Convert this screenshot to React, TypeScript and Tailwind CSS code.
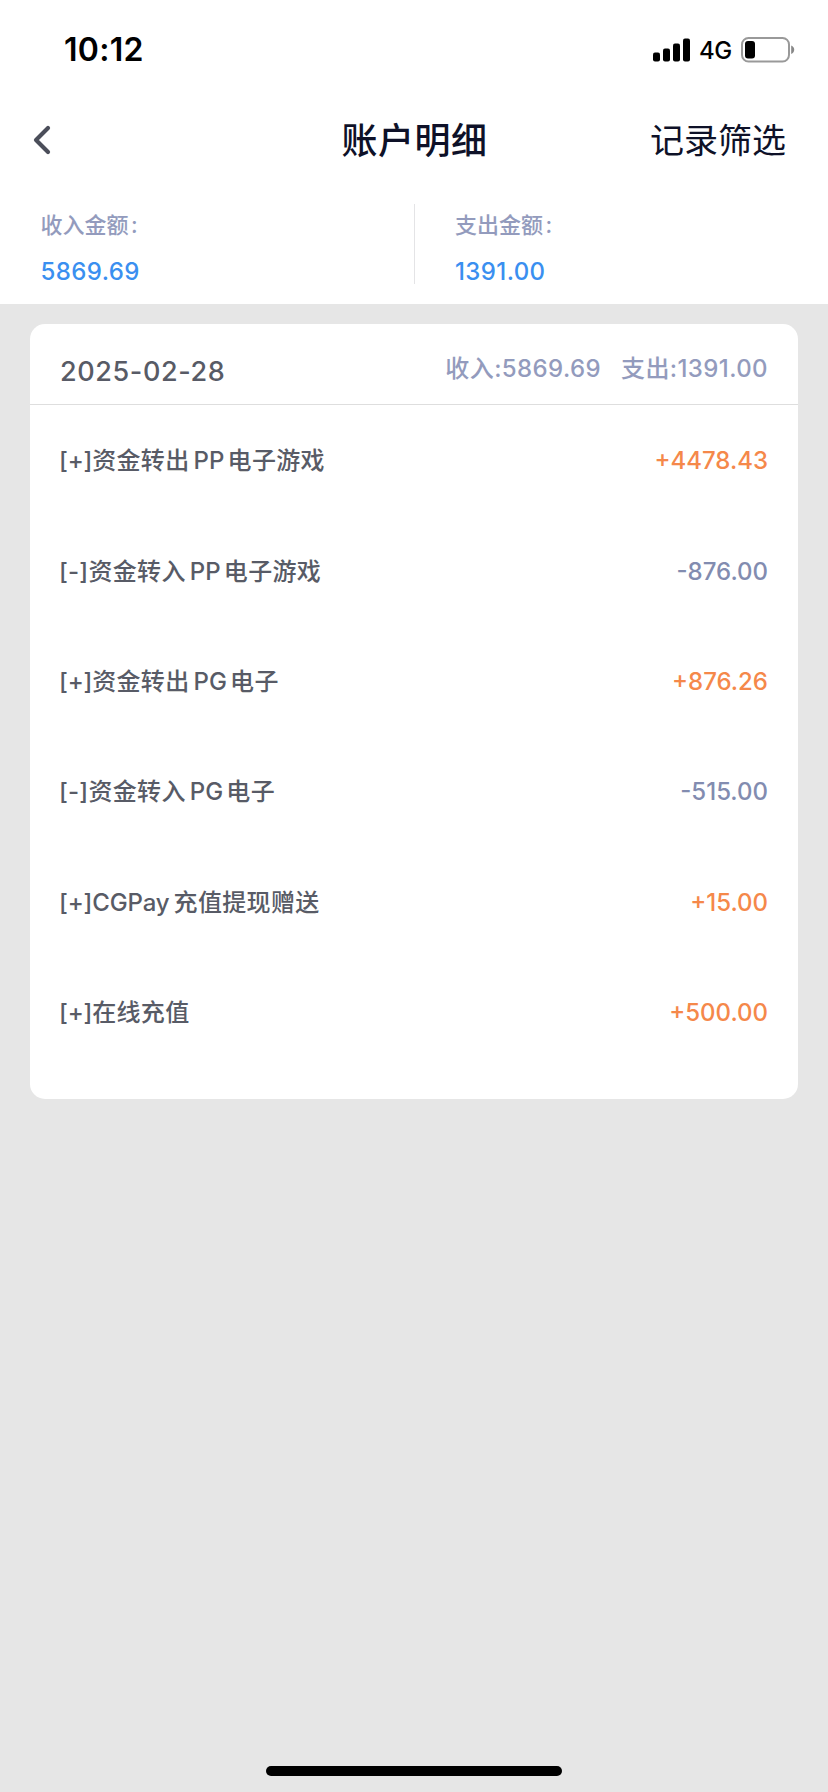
import React from "react";

type Part = { text: string; className: string };
type Entry = { label: Part[]; amount: string; amountClass: string };

const plus = "tracking-[-0.2px]";
const minus = "tracking-[0.2px]";
const cjk = "tracking-[0.35px]";
const mid = "ml-[4px] mr-[3px] tracking-[0.1px]";

const income = "text-[#f5884a]";
const expense = "text-[#828cb0]";

const entries: Entry[] = [
  {
    label: [
      { text: "[+]", className: plus },
      { text: "资金转出", className: cjk },
      { text: "PP", className: mid },
      { text: "电子游戏", className: cjk },
    ],
    amount: "+4478.43",
    amountClass: income,
  },
  {
    label: [
      { text: "[-]", className: minus },
      { text: "资金转入", className: cjk },
      { text: "PP", className: mid },
      { text: "电子游戏", className: cjk },
    ],
    amount: "-876.00",
    amountClass: expense,
  },
  {
    label: [
      { text: "[+]", className: plus },
      { text: "资金转出", className: cjk },
      { text: "PG", className: mid },
      { text: "电子", className: cjk },
    ],
    amount: "+876.26",
    amountClass: income,
  },
  {
    label: [
      { text: "[-]", className: minus },
      { text: "资金转入", className: cjk },
      { text: "PG", className: mid },
      { text: "电子", className: cjk },
    ],
    amount: "-515.00",
    amountClass: expense,
  },
  {
    label: [
      { text: "[+]", className: plus },
      { text: "CGPay", className: "mr-[4px] tracking-[-0.1px]" },
      { text: "充值提现赠送", className: cjk },
    ],
    amount: "+15.00",
    amountClass: income,
  },
  {
    label: [
      { text: "[+]", className: plus },
      { text: "在线充值", className: cjk },
    ],
    amount: "+500.00",
    amountClass: income,
  },
];

function StatusBar() {
  return (
    <div className="flex h-[100px] items-center justify-between pl-[64px] pr-[33px] text-black">
      <span className="text-[32px] font-semibold leading-none tracking-[0.3px]">10:12</span>
      <div className="flex items-center">
        <svg width="38" height="24" viewBox="0 0 38 24" fill="currentColor">
          <rect x="0" y="14.5" width="7" height="9" rx="2" />
          <rect x="10" y="10.5" width="7" height="13" rx="2" />
          <rect x="20" y="5.5" width="7" height="18" rx="2" />
          <rect x="30" y="0.5" width="7" height="23" rx="2" />
        </svg>
        <span className="ml-[8px] mt-[2px] w-[34px] text-[24px] font-medium leading-none tracking-[-0.5px]">4G</span>
        <svg className="ml-[8px]" width="54" height="26" viewBox="0 0 54 26">
          <rect x="1" y="1" width="47" height="23.5" rx="6.5" fill="none" stroke="#999" strokeWidth="2" />
          <rect x="4" y="4" width="10" height="17.5" rx="3" fill="#000" />
          <path d="M50.2 8.6c2 .8 3 2.300 3 4.200s-1 3.400-3 4.200z" fill="#888" />
        </svg>
      </div>
    </div>
  );
}

function Header() {
  return (
    <div className="grid h-[80px] grid-cols-[1fr_auto_1fr] items-center pl-[32px] pr-[42px] text-[#0e1128]">
      <svg width="20" height="32" viewBox="0 0 20 32" fill="none">
        <path d="M16 4 4 16l12 12" stroke="#4b4e5a" strokeWidth="4.200" strokeLinecap="round" strokeLinejoin="round" />
      </svg>
      <h1 className="ml-[11px] mt-[2px] text-[36px] font-medium leading-none tracking-[0.5px]">账户明细</h1>
      <button className="mt-[2px] justify-self-end text-[34px] font-normal leading-none">记录筛选</button>
    </div>
  );
}

function Summary({ title, value }: { title: string; value: string }) {
  return (
    <div className="flex flex-1 flex-col pl-[40.500px] font-medium">
      <span className="flex h-[46px] items-center text-[22px] leading-none text-[#939bbd]">
        {title}
        <span className="ml-[2.500px]">:</span>
      </span>
      <span className="flex h-[46px] items-center pt-[2px] text-[24px] leading-none tracking-[0.4px] text-[#3a8ff0]">
        {value}
      </span>
    </div>
  );
}

export default function App() {
  return (
    <div className="flex h-[1792px] w-[828px] flex-col bg-[#e6e6e6] font-['Inter','Noto_Sans_CJK_SC',sans-serif]">
      <div className="h-[304px] bg-white">
        <StatusBar />
        <Header />
        <div className="flex pt-[22px]">
          <Summary title="收入金额" value="5869.69" />
          <div className="mt-[2px] h-[80px] w-px bg-[#e4e4e6]" />
          <Summary title="支出金额" value="1391.00" />
        </div>
      </div>

      <div className="mx-[30px] mt-[20px] h-[775px] rounded-[15px] bg-white font-medium">
        <div className="flex h-[81px] items-center justify-between border-b border-[#dedede] pl-[30px] pr-[30px]">
          <span className="pt-[14px] text-[27px] leading-none tracking-[0.6px] text-[#585b66]">2025-02-28</span>
          <div className="flex gap-[20px] pt-[10px] text-[24px] leading-none tracking-[0.4px] text-[#939bbd]">
            <span>收入:5869.69</span>
            <span>支出:1391.00</span>
          </div>
        </div>
        <ul className="flex flex-col pt-px">
          {entries.map((entry, i) => (
            <li key={i} className="flex h-[110.400px] items-center justify-between pl-[29px] pr-[30px] text-[24px] leading-none">
              <span className="text-[#585b66]">
                {entry.label.map((part, j) => (
                  <span key={j} className={part.className}>{part.text}</span>
                ))}
              </span>
              <span className={entry.amountClass}>{entry.amount}</span>
            </li>
          ))}
        </ul>
      </div>

      <div className="mb-[16px] mt-auto h-[10px] w-[296px] self-center rounded-full bg-black" />
    </div>
  );
}
